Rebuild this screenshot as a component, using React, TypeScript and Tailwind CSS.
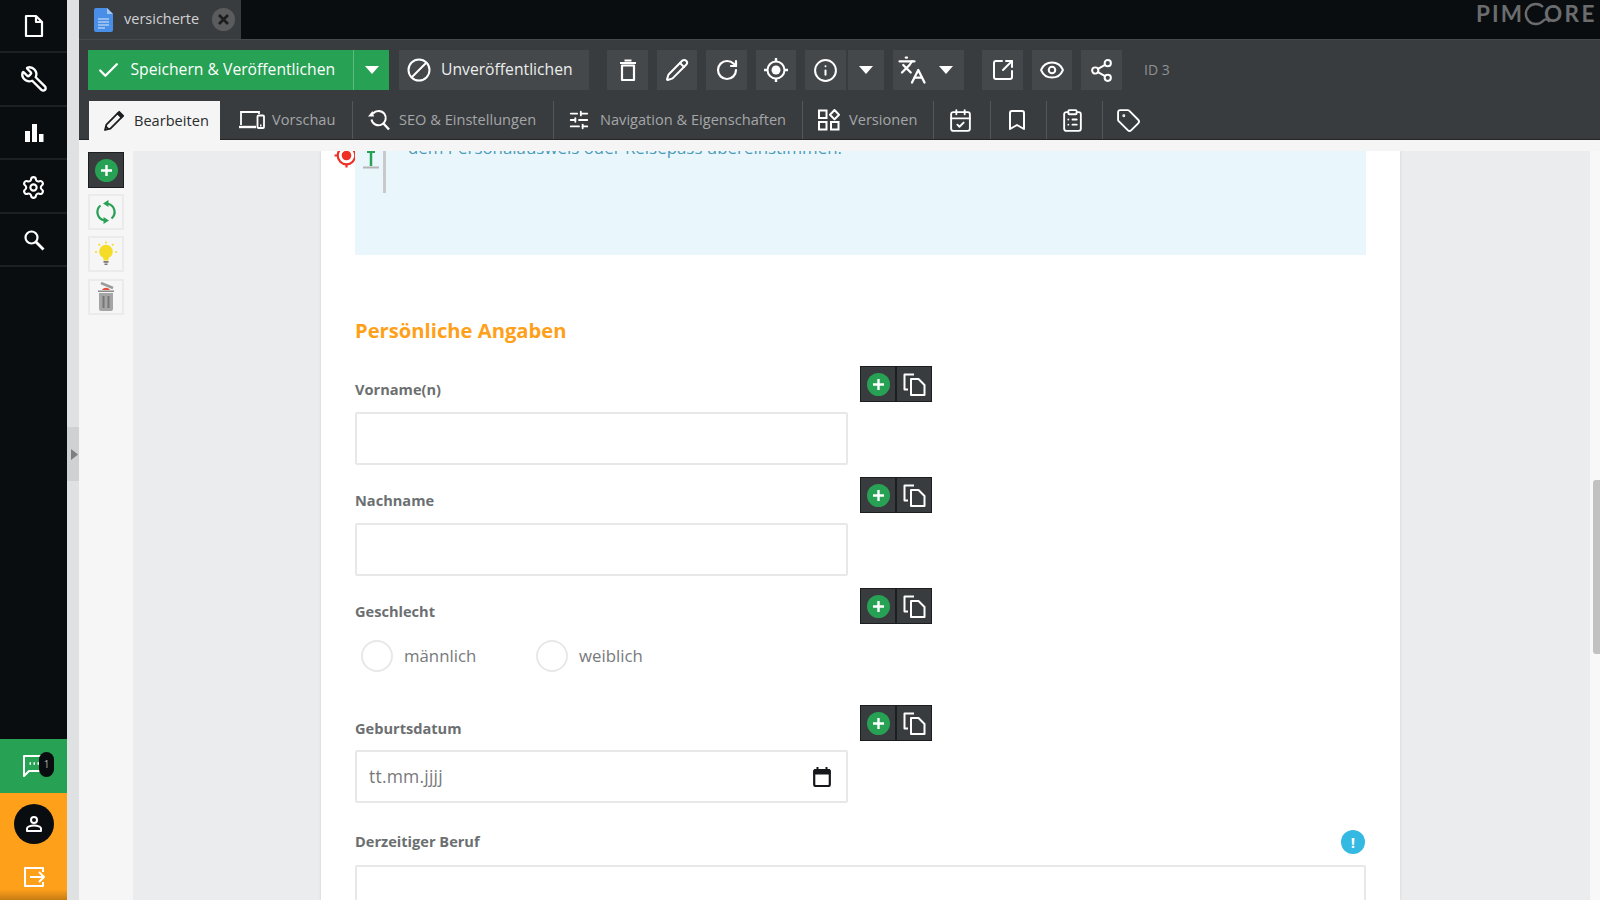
import React from 'react';
import {
  Bookmark, CalendarCheck, Check, ClipboardList, Eye, Info, Languages, Pencil,
  RotateCw, Settings, Share2, SlidersHorizontal, SquareArrowOutUpRight,
  Tag, Wrench,
} from 'lucide-react';

const FONT = "font-['Open_Sans',sans-serif]";

function Caret() {
  return (
    <svg width="14" height="8" viewBox="0 0 14 8" className="text-white">
      <path d="M0 0h14L7 8z" fill="currentColor" />
    </svg>
  );
}

function FileIcon() {
  return (
    <svg width="20" height="24" viewBox="0 0 20 24" fill="none" stroke="white" strokeWidth="2.2" strokeLinejoin="round">
      <path d="M2 2h10l6 6v14H2z" />
      <path d="M12 2v6h6" />
    </svg>
  );
}

function BarsIcon() {
  return (
    <svg width="20" height="20" viewBox="0 0 20 20" fill="white">
      <rect x="1" y="8" width="5" height="11" />
      <rect x="8" y="1" width="5" height="18" />
      <rect x="15" y="11" width="4.5" height="8" />
    </svg>
  );
}

function SearchIcon() {
  return (
    <svg width="22" height="22" viewBox="0 0 22 22" fill="none" stroke="white" strokeWidth="2.2">
      <circle cx="8.500" cy="8.500" r="6" />
      <path d="M13 13l7.500 7.500" strokeWidth="2.800" />
    </svg>
  );
}

function ChatIcon() {
  return (
    <svg width="26" height="26" viewBox="0 0 26 26" fill="none" stroke="white" strokeWidth="2">
      <path d="M3 3h20v15H8l-5 5z" strokeLinejoin="round" />
      <path d="M8.5 10.5h1.5M12.5 10.5h1.5M16.5 10.5h1.5" strokeWidth="2.4" />
    </svg>
  );
}

function UserIcon() {
  return (
    <svg width="18" height="18" viewBox="0 0 18 18" fill="none" stroke="white" strokeWidth="2">
      <circle cx="9" cy="5" r="3" />
      <path d="M2 16v-2.5c0-1.5 3.5-3 7-3s7 1.5 7 3V16z" strokeLinejoin="round" />
    </svg>
  );
}

function LogoutIcon() {
  return (
    <svg width="22" height="22" viewBox="0 0 22 22" fill="none" stroke="white" strokeWidth="2" strokeLinejoin="round">
      <path d="M20 6V2H2v18h18v-4" />
      <path d="M7 11h14M16 6l5 5-5 5" />
    </svg>
  );
}

function DocIcon() {
  return (
    <svg width="19" height="24" viewBox="0 0 19 24">
      <path d="M2 0h11l6 6v16a2 2 0 0 1-2 2H2a2 2 0 0 1-2-2V2a2 2 0 0 1 2-2z" fill="#4a8fe7" />
      <path d="M13 0l6 6h-6z" fill="#a5c8f5" />
      <path d="M4 11h11M4 14h11M4 17h11M4 20h7" stroke="#dcebfb" strokeWidth="1.2" />
    </svg>
  );
}

function BanIcon() {
  return (
    <svg width="24" height="24" viewBox="0 0 24 24" fill="none" stroke="white" strokeWidth="2">
      <circle cx="12" cy="12" r="10.5" />
      <path d="M5 19L19 5" />
    </svg>
  );
}

function TrashIcon() {
  return (
    <svg width="24" height="24" viewBox="0 0 24 24" fill="none" stroke="white" strokeWidth="2.2" strokeLinejoin="round">
      <path d="M4 5h16M8.500 2.500h7" />
      <path d="M6 7.500h12V22H6z" />
    </svg>
  );
}

function TargetIcon() {
  return (
    <svg width="26" height="26" viewBox="0 0 26 26" fill="none" stroke="white" strokeWidth="2">
      <circle cx="13" cy="13" r="8.5" />
      <circle cx="13" cy="13" r="4.5" fill="white" stroke="none" />
      <path d="M13 1v3.5M13 21.5V25M1 13h3.5M21.5 13H25" strokeWidth="2.4" />
    </svg>
  );
}

function PreviewIcon() {
  return (
    <svg width="27" height="20" viewBox="0 0 27 20" fill="none" stroke="white" strokeWidth="1.8">
      <path d="M3 15V2h18v2" />
      <path d="M1 17h17" strokeWidth="2.4" />
      <rect x="19.5" y="5.5" width="6.5" height="12.5" rx="1" />
      <path d="M22 15.5h1.5" />
    </svg>
  );
}

function SeoIcon() {
  return (
    <svg width="23" height="22" viewBox="0 0 23 22" fill="none" stroke="white" strokeWidth="2">
      <path d="M6 4.5a7.2 7.2 0 1 1-1.5 6" />
      <path d="M16 14l6 6.5" strokeWidth="2.4" />
      <path d="M1 7.5h6L5.5 2z" fill="white" stroke="none" />
    </svg>
  );
}

function VersionsIcon() {
  return (
    <svg width="22" height="22" viewBox="0 0 22 22" fill="none" stroke="white" strokeWidth="2">
      <rect x="1" y="1.5" width="7.5" height="7.5" />
      <rect x="1" y="13" width="7.5" height="7.5" />
      <rect x="13" y="13" width="7.5" height="7.5" />
      <path d="M16.5 1l4.5 4.7-4.5 4.7L12 5.7z" strokeLinejoin="round" />
    </svg>
  );
}

function PenFilled() {
  return (
    <svg width="22" height="22" viewBox="0 0 22 22" fill="none" stroke="#1b1d1f" strokeWidth="1.8" strokeLinejoin="round">
      <path d="M2 20l1.4-5.4L14.6 3.4l4 4L7.4 18.6z" />
      <path d="M16.2 1.8l4 4-1.6 1.6-4-4z" fill="#1b1d1f" />
      <path d="M2.8 16.5l2.7 2.7" />
    </svg>
  );
}

function PlusDot() {
  return (
    <span className="w-[23px] h-[23px] rounded-full bg-[#27a153] flex items-center justify-center">
      <svg width="13" height="13" viewBox="0 0 13 13" stroke="white" strokeWidth="2.4">
        <path d="M6.5 1v11M1 6.5h11" />
      </svg>
    </span>
  );
}

function CopyIcon() {
  return (
    <svg width="23" height="23" viewBox="0 0 23 23" fill="none" stroke="white" strokeWidth="2" strokeLinejoin="round">
      <path d="M5 16.500H1.500V1.500H11" />
      <path d="M8 6h7.500l6 6v10H8z" />
    </svg>
  );
}

function SyncIcon() {
  return (
    <svg width="24" height="24" viewBox="0 0 24 24" fill="none" stroke="#27a153" strokeWidth="2.200">
      <path d="M14 3.700A8.500 8.500 0 0 1 17.500 18.500" />
      <path d="M10 20.300A8.500 8.500 0 0 1 6.500 5.500" />
      <path d="M14.500 0L9 3.500 14.500 7z" fill="#27a153" stroke="none" />
      <path d="M9.500 17L15 20.500 9.500 24z" fill="#27a153" stroke="none" />
    </svg>
  );
}

function BulbIcon() {
  return (
    <svg width="24" height="26" viewBox="0 0 24 26" fill="none">
      <circle cx="12" cy="10.500" r="6.800" fill="#f5dc26" />
      <path d="M9 16h6l-.7 3.500H9.700z" fill="#f5dc26" />
      <path d="M9.500 20h5v1.800h-5zM10.500 22.500h3V24h-3z" fill="#777" />
      <path d="M12 0.500v2M4.500 3l1.400 1.500M19.500 3l-1.400 1.500M1 11h2M21 11h2" stroke="#f5dc26" strokeWidth="1.600" />
    </svg>
  );
}

function BinIcon() {
  return (
    <svg width="18" height="30" viewBox="0 0 18 30" fill="none">
      <path d="M4 1l12 5" stroke="#9a9a9a" strokeWidth="2.500" />
      <path d="M5 8c2-3 6-3 8 0z" fill="#ea4a3a" />
      <path d="M1 8.500h16V10H1z" fill="#8a8a8a" />
      <path d="M2 11h14v16a2 2 0 0 1-2 2H4a2 2 0 0 1-2-2z" fill="#a5a5a5" />
      <path d="M6.500 14v12M11.500 14v12" stroke="#777" strokeWidth="2" />
    </svg>
  );
}

function TargetRed() {
  return (
    <svg width="25" height="25" viewBox="0 0 25 25" fill="none" stroke="#ee3124" strokeWidth="2.200">
      <circle cx="12.500" cy="12.500" r="8.800" />
      <circle cx="12.500" cy="12.500" r="4.800" fill="#ee3124" stroke="none" />
      <path d="M12.500 0.500v3M12.500 21.500v3M0.500 12.500h3M21.500 12.500h3" />
    </svg>
  );
}

function DateIcon() {
  return (
    <svg width="18" height="20" viewBox="0 0 18 20" fill="none" stroke="#15171a">
      <path d="M4.500 0v3M13.500 0v3" strokeWidth="2" />
      <path d="M1 3.500a1 1 0 0 1 1-1h14a1 1 0 0 1 1 1V7H1z" fill="#15171a" strokeWidth="1" />
      <rect x="1.200" y="3" width="15.600" height="16" rx="1.500" strokeWidth="2.200" />
    </svg>
  );
}

function NavItem({ children }: { children: React.ReactNode }) {
  return (
    <div className="h-[53.4px] shrink-0 flex items-center justify-center border-b-2 border-[#1d2023]">
      {children}
    </div>
  );
}

function ToolButton({ className, children }: { className: string; children: React.ReactNode }) {
  return <div className={`${className} h-10 bg-[#44484b] flex items-center justify-center shrink-0`}>{children}</div>;
}

function Tab({ className, children }: { className: string; children: React.ReactNode }) {
  return (
    <div className={`${className} h-full shrink-0 flex items-center border-r border-[#53575a] text-[14.6px] text-[#a4a6a8]`}>
      {children}
    </div>
  );
}

function SideTool({ className, children }: { className: string; children: React.ReactNode }) {
  return (
    <div className={`${className} w-[36px] h-[36px] border-2 border-[#ebebeb] bg-[#f6f6f6] flex items-center justify-center`}>
      {children}
    </div>
  );
}

function FieldActions() {
  return (
    <div className="flex shrink-0 h-[36px] w-[72px] border border-[#1c1e20] bg-[#393c3f]">
      <div className="w-[36px] flex items-center justify-center border-r-2 border-[#1c1e20]">
        <PlusDot />
      </div>
      <div className="flex-1 flex items-center justify-center">
        <CopyIcon />
      </div>
    </div>
  );
}

function Label({ children }: { children: React.ReactNode }) {
  return <div className="h-5 leading-5 text-[14.6px] font-bold text-[#6c6f71]">{children}</div>;
}

function TextRow({ label, className }: { label: string; className: string }) {
  return (
    <div className={`${className} flex gap-3`}>
      <div className="w-[493px] pt-[13px]">
        <Label>{label}</Label>
        <div className="mt-[13px] h-[53px] bg-white border-2 border-[#e8e8e8] rounded-[2px]" />
      </div>
      <FieldActions />
    </div>
  );
}

function Radio({ label, className }: { label: string; className: string }) {
  return (
    <div className={`${className} flex items-center`}>
      <span className="w-[32px] h-[32px] rounded-full border-2 border-[#e8e8e8] bg-white" />
      <span className="ml-[11px] text-[16.8px] text-[#77797b]">{label}</span>
    </div>
  );
}

export default function App() {
  return (
    <div className={`${FONT} w-[1600px] h-[900px] flex overflow-hidden bg-white`}>
      {/* main nav */}
      <aside className="w-[67px] shrink-0 h-full bg-[#0a0d10] flex flex-col">
        <NavItem><FileIcon /></NavItem>
        <NavItem><Wrench size={28} strokeWidth={2} color="white" className="-scale-x-100" /></NavItem>
        <NavItem><div className="mt-[2px]"><BarsIcon /></div></NavItem>
        <NavItem><Settings size={25} strokeWidth={2} color="white" className="mt-[3px]" /></NavItem>
        <NavItem><div className="mt-[2px]"><SearchIcon /></div></NavItem>
        <div className="flex-1" />
        <div className="h-[54px] bg-[#27a153] flex items-center justify-center relative">
          <ChatIcon />
          <span className="absolute left-[39px] top-[13px] w-[15px] h-[25px] rounded-full bg-[#0a0d10] text-[10px] text-[#b0b2b4] flex items-center justify-center">1</span>
        </div>
        <div className="h-[107px] bg-gradient-to-b from-[#ffa01a] from-90% to-[#c67c14] flex flex-col items-center">
          <div className="mt-[11px] w-10 h-10 rounded-full bg-[#0a0d10] flex items-center justify-center">
            <UserIcon />
          </div>
          <div className="mt-[22px]"><LogoutIcon /></div>
        </div>
      </aside>

      {/* collapse strip */}
      <div className="w-[12px] shrink-0 h-full bg-[#dfe1e3] flex items-center">
        <div className="w-full h-[54px] bg-[#d0d1d2] flex items-center justify-end pr-[1px] mt-[8px]">
          <svg width="7" height="11" viewBox="0 0 7 11"><path d="M0 0l7 5.500L0 11z" fill="#7d7f80" /></svg>
        </div>
      </div>

      <div className="flex-1 min-w-0 h-full flex flex-col">
        {/* open documents */}
        <div className="h-[39px] shrink-0 bg-[#0a0d10] flex justify-between">
          <div className="w-[162px] bg-[#393c3f] flex items-center pl-[15px]">
            <DocIcon />
            <span className="ml-[11px] text-[14.5px] text-[#d0d1d2] -mt-[1px]">versicherte</span>
            <span className="ml-[13px] w-[23px] h-[23px] rounded-full bg-[#5a5c5e] flex items-center justify-center">
              <svg width="11" height="11" viewBox="0 0 11 11" stroke="#1c1e20" strokeWidth="2.800"><path d="M1 1l9 9M10 1l-9 9" /></svg>
            </span>
          </div>
          <div className="flex items-start pt-[2px] pr-[3px] text-[#6a6c6e]">
            <span className="text-[22.500px] leading-[24px] font-bold font-['Lato',sans-serif] tracking-[2px]">PIM</span>
            <svg width="30" height="26" viewBox="0 0 30 26" fill="none" stroke="currentColor" strokeWidth="2.400" className="-ml-[1px]">
              <path d="M20 5a10 10 0 1 0 0 14c2-2.500 5-2 6.500 1" />
            </svg>
            <span className="-ml-[9px] text-[22.500px] leading-[24px] font-bold font-['Lato',sans-serif] tracking-[2.500px]">ORE</span>
          </div>
        </div>

        {/* document toolbar */}
        <div className="h-[101px] shrink-0 bg-[#393c3f] border-t border-[#45494c] border-b border-b-[#232527] flex flex-col">
          <div className="h-[61px] flex items-start pt-[10px]">
            <div className="ml-[9px] w-[301px] h-10 bg-[#27a153] flex items-center shrink-0 text-white">
              <div className="w-[265px] flex items-center pl-[8px]">
                <Check size={25} strokeWidth={2.2} />
                <span className="ml-[9.500px] text-[15.700px]">Speichern &amp; Veröffentlichen</span>
              </div>
              <div className="flex-1 h-full border-l border-[#5cbb80] flex items-center justify-center"><Caret /></div>
            </div>
            <ToolButton className="ml-[10px] w-[190px] !justify-start pl-[8px] text-white">
              <BanIcon />
              <span className="ml-[10px] text-[15.700px] text-[#eceded]">Unveröffentlichen</span>
            </ToolButton>
            <ToolButton className="ml-[18px] w-[41px]"><TrashIcon /></ToolButton>
            <ToolButton className="ml-[9px] w-[40px]"><Pencil size={24} strokeWidth={2} color="white" /></ToolButton>
            <ToolButton className="ml-[9px] w-[41px]"><RotateCw size={24} strokeWidth={2.200} color="white" /></ToolButton>
            <ToolButton className="ml-[9px] w-[40px]"><TargetIcon /></ToolButton>
            <ToolButton className="ml-[9px] w-[41px]"><Info size={25} strokeWidth={1.900} color="white" /></ToolButton>
            <ToolButton className="ml-[2px] w-[36px]"><Caret /></ToolButton>
            <ToolButton className="ml-[9px] w-[71px] !justify-start pl-[4px] gap-[12px]">
              <Languages size={30} strokeWidth={1.800} color="white" />
              <Caret />
            </ToolButton>
            <ToolButton className="ml-[18px] w-[41px]"><SquareArrowOutUpRight size={24} strokeWidth={2} color="white" /></ToolButton>
            <ToolButton className="ml-[9px] w-[40px]"><Eye size={26} strokeWidth={1.900} color="white" /></ToolButton>
            <ToolButton className="ml-[9px] w-[41px]"><Share2 size={25} strokeWidth={1.900} color="white" /></ToolButton>
            <span className="ml-[22px] h-10 leading-10 text-[14px] text-[#8f9193]">ID 3</span>
          </div>
          <div className="flex-1 flex min-h-0">
            <div className="ml-[10px] w-[131px] h-[calc(100%+1px)] shrink-0 bg-[#f5f5f5] flex items-center pl-[14px] text-[14.6px] text-[#2a2c2e]">
              <PenFilled />
              <span className="ml-[9px]">Bearbeiten</span>
            </div>
            <Tab className="w-[133px] pl-[18px]"><PreviewIcon /><span className="ml-[7px]">Vorschau</span></Tab>
            <Tab className="w-[201px] pl-[14px]"><SeoIcon /><span className="ml-[9px]">SEO &amp; Einstellungen</span></Tab>
            <Tab className="w-[249px] pl-[14px]"><SlidersHorizontal size={22} strokeWidth={2} color="white" /><span className="ml-[10px]">Navigation &amp; Eigenschaften</span></Tab>
            <Tab className="w-[131px] pl-[15px]"><VersionsIcon /><span className="ml-[9px]">Versionen</span></Tab>
            <Tab className="w-[57px] justify-center pr-[4px]"><CalendarCheck size={25} strokeWidth={1.800} color="white" /></Tab>
            <Tab className="w-[56px] justify-center pr-[4px]"><Bookmark size={24} strokeWidth={2} color="white" /></Tab>
            <Tab className="w-[56px] justify-center pr-[4px]"><ClipboardList size={25} strokeWidth={1.800} color="white" /></Tab>
            <div className="w-[56px] h-full flex items-center justify-center pr-[6px]"><Tag size={25} strokeWidth={1.800} color="white" /></div>
          </div>
        </div>

        <div className="h-[11px] shrink-0 bg-[#f5f5f5]" />

        <div className="flex-1 min-h-0 flex overflow-hidden">
          {/* editable tools */}
          <div className="w-[54px] shrink-0 bg-[#f6f6f6] pl-[9px] pt-[1px] flex flex-col">
            <div className="w-[36px] h-[36px] bg-[#393c3f] border border-[#1c1e20] flex items-center justify-center">
              <PlusDot />
            </div>
            <SideTool className="mt-[6px]"><SyncIcon /></SideTool>
            <SideTool className="mt-[6px]"><BulbIcon /></SideTool>
            <SideTool className="mt-[7px]"><BinIcon /></SideTool>
          </div>

          {/* canvas */}
          <div className="flex-1 min-w-0 bg-[#ebecee] pl-[188px] pr-[190px] flex">
            <div className="flex-1 min-w-0 bg-white relative pl-[34px] pr-[34px] shadow-[-1px_0_2px_rgba(0,0,0,0.06),1px_0_2px_rgba(0,0,0,0.06)]">
              <div className="absolute left-[13px] top-[-8px]"><TargetRed /></div>
              <div className="h-[104px] bg-[#e9f7fd] relative overflow-hidden">
                <div className="absolute left-[8px] top-0 flex flex-col items-center">
                  <svg width="16" height="18" viewBox="0 0 16 18">
                    <path d="M8 0v15" stroke="#27a153" strokeWidth="2.500" />
                    <path d="M4 1h8" stroke="#27a153" strokeWidth="2" />
                    <path d="M0 16.500h16" stroke="#b4b4b4" strokeWidth="2" />
                  </svg>
                </div>
                <div className="absolute left-[28px] top-0 w-[3px] h-[42px] bg-[#c9c9c9]" />
                <p className="pl-[53px] -mt-[15px] text-[16.900px] leading-[24px] text-[#4d9ab5]">
                  dem Personalausweis oder Reisepass übereinstimmen.
                </p>
              </div>

              <h2 className="mt-[59px] h-[32px] leading-[32px] text-[20.200px] font-bold text-[#ffa01a]">Persönliche Angaben</h2>

              <div className="mt-[20px] flex flex-col">
                <TextRow label="Vorname(n)" className="" />
                <TextRow label="Nachname" className="mt-[12px]" />

                <div className="mt-[12px] flex gap-3">
                  <div className="w-[493px] pt-[13px]">
                    <Label>Geschlecht</Label>
                    <div className="mt-[19px] ml-[6px] flex">
                      <Radio label="männlich" className="w-[175px]" />
                      <Radio label="weiblich" className="" />
                    </div>
                  </div>
                  <FieldActions />
                </div>

                <div className="mt-[33px] flex gap-3">
                  <div className="w-[493px] pt-[13px]">
                    <Label>Geburtsdatum</Label>
                    <div className="mt-[12px] h-[53px] bg-white border-2 border-[#e8e8e8] rounded-[2px] flex items-center justify-between pl-[12px] pr-[15px]">
                      <span className="text-[17.500px] tracking-[0.200px] text-[#77797b]">tt.mm.jjjj</span>
                      <DateIcon />
                    </div>
                  </div>
                  <FieldActions />
                </div>

                <div className="mt-[28px] relative">
                  <Label>Derzeitiger Beruf</Label>
                  <span className="absolute right-[1px] -top-[1px] w-[24px] h-[24px] rounded-full bg-[#34b9e2] flex items-center justify-center text-white text-[15px] font-bold">!</span>
                  <div className="mt-[14px] h-[52px] bg-white border-2 border-[#e8e8e8] rounded-[2px]" />
                </div>
              </div>
            </div>
          </div>

          {/* scrollbar */}
          <div className="w-[10px] shrink-0 bg-[#f8f8f8] pl-[3px] pt-[329px]">
            <div className="w-[7px] h-[174px] rounded-l-[3px] bg-[#c1c1c1]" />
          </div>
        </div>
      </div>
    </div>
  );
}
